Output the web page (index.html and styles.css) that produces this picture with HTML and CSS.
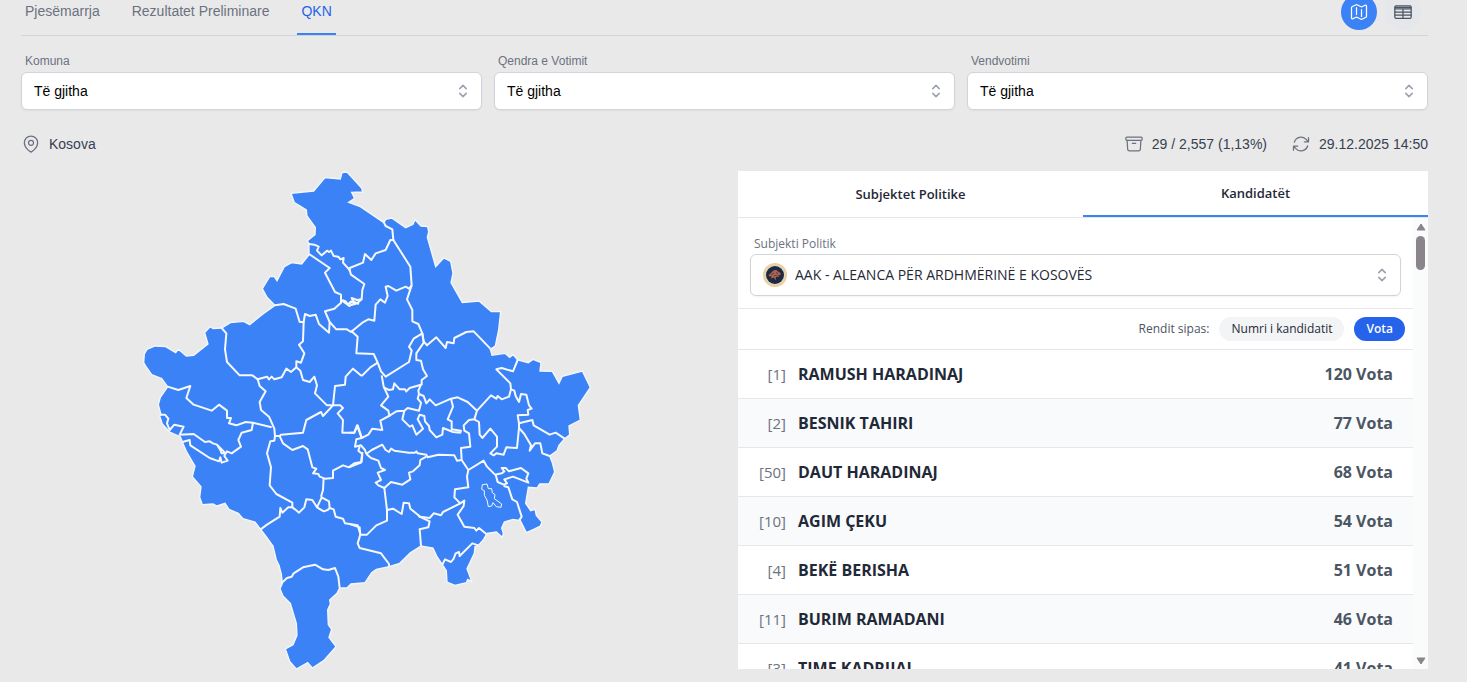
FILE: index.html
```html
<!DOCTYPE html>
<html lang="sq">
<head>
<meta charset="utf-8">
<meta name="viewport" content="width=device-width, initial-scale=1">
<title>Rezultatet - QKN</title>
<link rel="stylesheet" href="styles.css">
</head>
<body>
<main class="page">
  <header class="topbar">
    <nav class="tabs">
      <a class="tab" href="#pjesemarrja">Pjesëmarrja</a>
      <a class="tab" href="#preliminare">Rezultatet Preliminare</a>
      <a class="tab tab-active" href="#qkn" aria-current="page">QKN</a>
    </nav>
    <div class="views">
      <button class="view view-active" type="button" aria-label="Harta">
        <svg class="icon" viewBox="0 0 24 24"><path d="M9 6.75V15m6-6v8.25m.5 3.5 4.88-2.44c.38-.19.62-.58.62-1V4.82c0-.84-.88-1.38-1.63-1l-3.87 1.93c-.32.16-.69.16-1 0L9.5 3.25a1.1 1.1 0 0 0-1 0L3.62 5.7c-.38.18-.62.57-.62 1v12.48c0 .84.88 1.38 1.63 1l3.87-1.93c.32-.16.69-.16 1 0l5 2.5c.31.16.68.16 1 0Z"/></svg>
      </button>
      <button class="view" type="button" aria-label="Tabela">
        <svg class="icon" viewBox="0 0 24 24"><rect x="2.2" y="4.5" width="19.6" height="15" rx="1.5"/><path d="M2.5 8.2h19M2.5 12h19M2.5 15.8h19M12 8.2v11.3M2.5 6.4h19"/></svg>
      </button>
    </div>
  </header>

  <section class="filters">
    <div class="field">
      <label class="field-label" for="komuna">Komuna</label>
      <div class="select-box">
        <select class="select" id="komuna"><option>Të gjitha</option></select>
        <svg class="chevrons" viewBox="0 0 20 20"><path d="m6 7 4-4 4 4M6 13l4 4 4-4"/></svg>
      </div>
    </div>
    <div class="field">
      <label class="field-label" for="qendra">Qendra e Votimit</label>
      <div class="select-box">
        <select class="select" id="qendra"><option>Të gjitha</option></select>
        <svg class="chevrons" viewBox="0 0 20 20"><path d="m6 7 4-4 4 4M6 13l4 4 4-4"/></svg>
      </div>
    </div>
    <div class="field">
      <label class="field-label" for="vendvotimi">Vendvotimi</label>
      <div class="select-box">
        <select class="select" id="vendvotimi"><option>Të gjitha</option></select>
        <svg class="chevrons" viewBox="0 0 20 20"><path d="m6 7 4-4 4 4M6 13l4 4 4-4"/></svg>
      </div>
    </div>
  </section>

  <section class="status">
    <div class="status-item">
      <svg class="icon" viewBox="0 0 24 24"><path d="M15 10.5a3 3 0 1 1-6 0 3 3 0 0 1 6 0Z"/><path d="M20 10.5c0 7.1-8 11.2-8 11.2S4 17.600 4 10.500a8 8 0 0 1 16 0Z"/></svg>
      <span>Kosova</span>
    </div>
    <div class="status-group">
      <div class="status-item">
        <svg class="icon" viewBox="0 0 24 24"><path d="m20.250 7.500-.63 10.630a2.250 2.250 0 0 1-2.240 2.120H6.620a2.250 2.250 0 0 1-2.240-2.120L3.750 7.500M10 11.250h4M3.380 7.500h17.250c.62 0 1.120-.5 1.120-1.120v-1.500c0-.63-.5-1.130-1.120-1.130H3.380c-.63 0-1.130.5-1.130 1.130v1.500c0 .62.5 1.120 1.130 1.120Z"/></svg>
        <span>29 / 2,557 (1,13%)</span>
      </div>
      <div class="status-item">
        <svg class="icon" viewBox="0 0 24 24"><path d="M16.020 9.350h5V4.360M2.980 19.640v-4.990h5M2.980 14.650l3.190 3.180a8.250 8.250 0 0 0 13.800-3.700M4.030 9.870a8.250 8.250 0 0 1 13.800-3.700l3.180 3.180"/></svg>
        <span>29.12.2025 14:50</span>
      </div>
    </div>
  </section>

  <section class="content">
    <svg class="map" viewBox="19 33 1380 1494" role="img" aria-label="Harta e Kosovës">
      <path class="land" d="M484 100 552 93 586 53 632 57 637 38 652 36 696 84 699 96 666 97 675 115 657 127 692 140 763 188 768 178 786 174 828 203 850 193 856 179 874 198 894 200 897 216 893 232 918 320 942 294 963 304 970 340 964 368 998 428 1048 423 1085 455 1113 454 1107 510 1097 558 1082 568 1087 586 1126 580 1140 592 1150 584 1164 600 1196 608 1210 598 1234 608 1231 633 1268 634 1288 670 1298 649 1358 633 1382 682 1346 736 1352 780 1318 798 1320 824 1305 836 1288 856 1282 872 1260 888 1268 908 1275 936 1258 971 1230 972 1222 984 1196 982 1188 1030 1203 1052 1216 1048 1220 1066 1237 1086 1232 1098 1212 1108 1190 1118 1172 1082 1150 1078 1124 1086 1116 1104 1121 1120 1118 1132 1100 1116 1072 1120 1062 1138 1046 1156 1036 1160 1034 1180 1012 1226 1026 1264 1014 1258 1010 1268 976 1276 952 1266 950 1232 938 1214 922 1190 910 1164 874 1158 842 1178 810 1210 778 1220 740 1228 726 1238 706 1268 664 1272 652 1284 630 1284 622 1300 600 1320 602 1332 594 1350 596 1394 606 1408 598 1432 619 1460 582 1502 548 1524 534 1508 500 1527 480 1504 467 1467 490 1454 502 1426 500 1390 482 1330 460 1308 451 1286 458 1270 455 1242 448 1216 440 1200 430 1158 408 1128 393 1108 376 1086 340 1076 326 1060 298 1048 286 1030 262 1038 250 1032 218 1034 210 1012 214 980 188 950 196 918 170 874 158 846 152 830 120 816 98 792 90 768 94 764 86 734 92 712 114 680 96 656 66 644 52 624 42 608 44 582 52 568 76 558 108 560 138 578 146 568 170 588 192 586 235 552 225 518 242 500 250 506 276 504 302 488 342 484 360 494 400 462 436 436 412 412 398 386 420 350 434 350 442 362 464 320 486 308 516 312 538 284 538 252 533 242 556 224 557 202 532 168 530 150 494 128Z"/>
      <g class="borders" transform="translate(420 0)">
        <path d="M343 188 348 198 368 208 371 240 362 240 348 270 318 280 305 300 286 282 280 308 240 324 240 334"/>
        <path d="M118 252 134 254 147 260 142 272 156 286 172 272 178 276 184 272 192 288 206 290 212 298 222 294 220 308 240 330 244 344 284 372 278 390 276 418 262 430 248 434 238 438 228 424 218 420"/>
        <path d="M118 282 180 324 166 338 196 396 214 404 214 428 194 446 166 454 180 486 200 508 232 508 244 516 266 498 278 488 296 478 314 482 318 434 332 418 346 428 354 408 348 380 356 378 380 392 408 380 418 386 426 376 422 320 371 240"/>
        <path d="M214 420 234 434 244 424 256 432 246 414 262 420 276 418M234 434 250 424 268 432"/>
        <path d="M426 376 412 418 428 450 428 484 446 492 458 520 462 544 472 556 500 532 528 564 532 546 552 550 554 534 590 516 612 514 662 566"/>
        <path d="M16 436 42 432 78 446 90 486 102 486 106 462 120 468 138 464 148 492 178 518 180 486"/>
      </g>
      <g class="borders" transform="translate(0 360)">
        <path d="M276 144 290 160 286 208 292 246 330 286 368 286 384 298 412 290 418 298 426 290 434 298 456 292 470 266 484 276 500 262 500 244 514 248 524 220 508 194 520 184 522 126"/>
        <path d="M384 298 390 318 408 334 390 366 394 390 418 410 426 428 434 446 436 468"/>
        <path d="M114 320 146 330 182 318 170 354 192 374 246 392 268 374 292 392 292 414 304 414 298 430 320 436 348 426 370 428 426 442"/>
        <path d="M370 428 366 450 336 458 326 480 334 500 306 520 292 514 288 520"/>
        <path d="M92 404 106 404 116 416 112 430 120 450 134 434 162 440 150 464 192 462 226 486 240 484 250 490 262 494 288 520 284 528 294 542 276 548 272 532 268 544 240 534 182 496 180 480 158 486M262 494 272 510 276 520 288 520"/>
        <path d="M436 468 450 468 454 464 520 458 530 420 574 396 580 408 610 376 592 376 556 340 562 316 554 290 540 306 520 300 512 272 500 262"/>
        <path d="M450 468 460 490 488 510 520 498 534 508 548 562 560 566 550 580 566 582 570 590 586 596 610 594 610 572 640 556 658 562 694 548 698 516"/>
        <path d="M436 468 434 482 422 484 412 520 424 562 422 588"/>
        <path d="M610 376 632 376 640 384 624 400 640 420 638 458 674 458 684 436 696 472"/>
        <path d="M610 376 616 318 646 314 648 290 670 266 696 288"/>
      </g>
      <g class="borders" transform="translate(660 420)">
        <path d="M4 92 24 110 20 160 72 162 84 188 94 214 108 230 178 186 186 152 178 140 192 116 218 100"/>
        <path d="M84 188 62 202 36 228M96 226 102 260 116 290 94 316 116 332 120 350"/>
        <path d="M102 262 118 270 130 268 134 250 150 268 166 268 170 274 180 264 214 254 206 272 208 282"/>
        <path d="M218 100 222 128 200 160 200 180 214 182 220 208 232 228 216 240 216 256"/>
        <path d="M208 282 204 296 214 308 208 332 174 324 164 332 140 334 118 348 92 362 98 390 68 386 56 404 36 414 22 376 14 398 0 398"/>
        <path d="M208 282 222 288 230 310 240 298 258 316 304 296 324 292 354 306 382 332 424 286 440 296 444 288 456 298 478 290 484 268 482 250 440 208 456 204 490 214 504 180"/>
        <path d="M304 296 310 320 294 358 306 364 306 388 334 392 332 398 310 396 280 384 278 404 260 412 240 390 238 378 226 364 224 348 210 344 204 358 220 386 200 404 188 376 180 380 158 358 164 332"/>
        <path d="M382 332 374 358 358 360 342 376 344 392 358 400 362 440 334 444 336 480 356 510"/>
        <path d="M374 358 388 366 390 404 398 414 422 386 442 410 442 440 422 460 432 466 440 460 462 464 470 442 502 444 508 384 508 370"/>
        <path d="M484 268 494 272 498 288 508 306 514 282 530 284 538 316 546 326 534 330 536 344 504 346 508 370 548 360 552 376 600 404 618 398 645 416"/>
        <path d="M508 384 524 402 544 436 540 452 556 430 572 430 578 460 600 468"/>
        <path d="M36 414 20 418 16 440 34 436 46 450 50 462M30 440 26 452 38 462 36 486 14 490 0 500"/>
        <path d="M50 462 66 450 98 434 108 450 118 456 124 446 134 452 178 458 196 458 200 454 204 460 230 464 234 472 266 464 314 466 322 482 336 480"/>
      </g>
      <g class="borders" transform="translate(660 720)">
        <path d="M50 162 64 174 86 182 94 204 106 210 84 218 94 240 78 248 86 256 104 264 124 246 158 254 182 238 178 218 190 214 210 196 212 180 230 170"/>
        <path d="M104 264 112 330 130 326 156 342 162 308 178 310 182 326 212 350 240 354 252 340 274 346 280 336 332 310 344 302 342 318 324 344 344 380 374 384 380 392 388 384 410 402"/>
        <path d="M356 210 352 230 356 262 316 268 314 292 332 310"/>
        <path d="M356 210 402 182 412 200 436 224 456 220 464 214 456 204 468 204 478 214 514 204 536 220 530 236 536 248 490 230 464 238 472 250 462 254 444 246 438 224"/>
        <path d="M462 258 476 262 488 298 502 306 516 350 508 362"/>
        <path d="M112 330 112 362 80 376 52 404 32 404 24 430 30 444 94 460 118 492 118 500M32 404 30 382 0 372"/>
        <path d="M206 348 240 364 236 382 210 388 214 438M278 494 286 478 304 486 312 476 318 460 328 456 330 468 368 430 386 436"/>
        <path class="inset" d="M398 254 412 252 416 266 426 266 428 278 436 284 434 296 456 312 454 322 440 320 430 308 426 318 416 320 412 300 404 286 404 272 396 268Z"/>
      </g>
      <g class="borders" transform="translate(150 780)">
        <path d="M272 168 270 196 290 222 338 248 338 262 326 262 308 278 302 264 300 290 262 314 243 328"/>
        <path d="M338 262 346 268 358 278 374 262 380 238 398 240 412 262 432 274 444 270 450 264 448 244 426 232 412 262M432 174 430 210 424 230"/>
        <path d="M450 264 462 268 468 290 490 296 496 310 534 316 542 342"/>
        <path d="M305 490 322 474 336 470 342 460 370 442 406 434 430 448 446 450 466 444 476 470 480 504"/>
      </g>
    </svg>

    <div class="panel">
      <div class="panel-tabs">
        <button class="panel-tab" type="button">Subjektet Politike</button>
        <button class="panel-tab panel-tab-active" type="button">Kandidatët</button>
      </div>
      <div class="panel-body">
        <div class="scroller">
          <div class="party-field">
            <label class="field-label" for="subjekti">Subjekti Politik</label>
            <div class="select-box">
              <svg class="party-logo" viewBox="0 0 24 24"><circle cx="12" cy="12" r="12" fill="#f2cf92"/><circle cx="12" cy="12" r="10.500" fill="#ded6c6"/><circle cx="12" cy="12" r="9" fill="#1f2940"/><path d="M5.500 13c.2-2 2-2.500 3-3.500 1-1.500 2.500-3 4.500-2.500 1.500.3 1.600 1.500 3 2s2 1.500 1.500 3l-3 .5 2 1-3.500.5-.5 3.500-1.500-3-3 1 .5-2Z" fill="#a8644e"/><path d="m8 12 3-2M13 9l2 2M11 13l3-1" stroke="#5a4050"/></svg>
              <select class="select party-select" id="subjekti"><option>AAK - ALEANCA PËR ARDHMËRINË E KOSOVËS</option></select>
              <svg class="chevrons" viewBox="0 0 20 20"><path d="m6 7 4-4 4 4M6 13l4 4 4-4"/></svg>
            </div>
          </div>
          <div class="sortbar">
            <span>Rendit sipas:</span>
            <button class="pill" type="button">Numri i kandidatit</button>
            <button class="pill pill-active" type="button">Vota</button>
          </div>
          <table class="candidates">
            <tbody>
              <tr><td class="num">[1]</td><td class="name">RAMUSH HARADINAJ</td><td class="votes">120 Vota</td></tr>
              <tr><td class="num">[2]</td><td class="name">BESNIK TAHIRI</td><td class="votes">77 Vota</td></tr>
              <tr><td class="num">[50]</td><td class="name">DAUT HARADINAJ</td><td class="votes">68 Vota</td></tr>
              <tr><td class="num">[10]</td><td class="name">AGIM ÇEKU</td><td class="votes">54 Vota</td></tr>
              <tr><td class="num">[4]</td><td class="name">BEKË BERISHA</td><td class="votes">51 Vota</td></tr>
              <tr><td class="num">[11]</td><td class="name">BURIM RAMADANI</td><td class="votes">46 Vota</td></tr>
              <tr><td class="num">[3]</td><td class="name">TIME KADRIJAJ</td><td class="votes">41 Vota</td></tr>
            </tbody>
          </table>
        </div>
        <div class="scrollbar" aria-hidden="true">
          <svg class="arrow" viewBox="0 0 10 8"><path d="M5 1 9 7H1Z"/></svg>
          <div class="thumb"></div>
          <svg class="arrow arrow-down" viewBox="0 0 10 8"><path d="M5 7 1 1h8Z"/></svg>
        </div>
      </div>
    </div>
  </section>
</main>
</body>
</html>
```
FILE: styles.css
```css
* {
  box-sizing: border-box;
}

body {
  margin: 0;
  height: 100vh;
  overflow: hidden;
  background: #e9e9e9;
  color: #374151;
  font: 14px/20px "Liberation Sans", Arial, sans-serif;
}

button,
select {
  font: inherit;
}

.page {
  padding: 0 39px 0 21px;
}

.icon {
  width: 20px;
  height: 20px;
  flex: none;
  fill: none;
  stroke: currentColor;
  stroke-width: 1.5;
  stroke-linecap: round;
  stroke-linejoin: round;
}

.topbar {
  display: flex;
  justify-content: space-between;
  height: 36px;
  border-bottom: 1px solid #d1d5db;
}

.tabs {
  display: flex;
  gap: 24px;
}

.tab {
  height: 35px;
  padding: 1px 4px 0;
  color: #6b7280;
  text-decoration: none;
}

.tab-active {
  color: #2563eb;
  border-bottom: 2px solid #3b82f6;
}

.views {
  display: flex;
  gap: 8px;
  margin: -6px 7px 0 0;
}

.view {
  display: grid;
  place-items: center;
  width: 36px;
  height: 36px;
  padding: 0;
  border: 0;
  border-radius: 50%;
  background: #e5e7eb;
  color: #4b5563;
}

.view-active {
  background: #3b82f6;
  color: #fff;
}

.filters {
  display: grid;
  grid-template-columns: repeat(3, 1fr);
  gap: 12px;
  padding-top: 16px;
}

.field-label {
  display: block;
  padding-left: 4px;
  color: #6b7280;
  font-size: 12px;
  line-height: 18px;
}

.field .field-label {
  margin-bottom: 2px;
}

.select-box {
  position: relative;
}

.select {
  display: block;
  width: 100%;
  height: 38px;
  padding: 0 36px 0 12px;
  border: 1px solid #d1d5db;
  border-radius: 6px;
  background: #fff;
  box-shadow: 0 1px 2px rgba(0, 0, 0, 0.05);
  color: #000;
  appearance: none;
}

.chevrons {
  position: absolute;
  top: 50%;
  right: 9px;
  width: 20px;
  height: 20px;
  margin-top: -10px;
  padding: 2px;
  fill: none;
  stroke: #9ca3af;
  stroke-width: 2;
  stroke-linecap: round;
  stroke-linejoin: round;
  pointer-events: none;
}

.status {
  display: flex;
  justify-content: space-between;
  padding: 24px 0 17px;
}

.status-group {
  display: flex;
  gap: 24px;
}

.status-item {
  display: flex;
  align-items: center;
  gap: 8px;
}

.status-item .icon {
  color: #6b7280;
}

.content {
  display: grid;
  grid-template-columns: 1fr 1fr;
  gap: 27px;
  height: calc(100vh - 184px);
}

.map {
  width: 100%;
  height: 100%;
  min-height: 0;
  overflow: visible;
}

.land {
  fill: #3b82f6;
  stroke: #f4f7fc;
  stroke-width: 4;
}

.borders {
  fill: none;
  stroke: #f6f9ff;
  stroke-width: 6;
  stroke-linejoin: round;
}

.inset {
  stroke-width: 3;
}

.panel {
  display: flex;
  flex-direction: column;
  min-height: 0;
  background: #fff;
  color: #1f2937;
  font-family: "Open Sans", "Noto Sans", sans-serif;
}

.panel-tabs {
  display: grid;
  grid-template-columns: 1fr 1fr;
  flex: none;
  height: 47px;
  border-bottom: 1px solid #e5e7eb;
}

.panel-tab {
  padding: 0;
  border: 0;
  background: none;
  color: #1f2937;
  font-size: 13px;
  font-weight: 600;
}

.panel-tab-active {
  border-bottom: 2px solid #3b82f6;
}

.panel-body {
  display: flex;
  flex: 1;
  min-height: 0;
}

.scroller {
  flex: 1;
  overflow-y: auto;
  scrollbar-width: none;
}

.party-field {
  padding: 17px 12px 12px;
  border-bottom: 1px solid #e5e7eb;
}

.party-field .field-label {
  margin-bottom: 1px;
}

.party-select {
  height: 42px;
  padding-left: 44px;
  color: #1f2937;
  font-size: 14px;
  font-weight: 500;
}

.party-logo {
  position: absolute;
  top: 9px;
  left: 13px;
  width: 24px;
  height: 24px;
}

.sortbar {
  display: flex;
  align-items: center;
  justify-content: flex-end;
  gap: 10px;
  height: 41px;
  padding-right: 8px;
  border-bottom: 1px solid #e5e7eb;
  color: #4b5563;
  font-size: 12px;
}

.pill {
  height: 24px;
  padding: 0 12px;
  border: 0;
  border-radius: 12px;
  background: #f3f4f6;
  color: #1f2937;
  font-weight: 500;
}

.pill-active {
  background: #2563eb;
  color: #fff;
  font-weight: 600;
}

.candidates {
  width: 100%;
  border-spacing: 0;
  font-size: 16px;
}

.candidates tr:nth-child(even) {
  background: #f9fafb;
}

.candidates td {
  height: 49px;
  padding: 0;
  border-bottom: 1px solid #e5e7eb;
}

.candidates .num {
  width: 48px;
  color: #6b7280;
  font-size: 15px;
  text-align: right;
}

.candidates .name {
  padding-left: 12px;
  font-weight: 700;
}

.candidates .votes {
  padding-right: 20px;
  color: #4b5563;
  font-weight: 700;
  text-align: right;
}

.scrollbar {
  display: flex;
  flex-direction: column;
  align-items: center;
  width: 15px;
  padding: 5px 0 4px;
  background: #fafcfb;
}

.arrow {
  width: 10px;
  height: 8px;
  fill: #8b848b;
  stroke: #8b848b;
  stroke-linejoin: round;
}

.arrow-down {
  margin-top: auto;
}

.thumb {
  width: 9px;
  height: 34px;
  margin-top: 5px;
  border-radius: 5px;
  background: #8b848b;
}
```
